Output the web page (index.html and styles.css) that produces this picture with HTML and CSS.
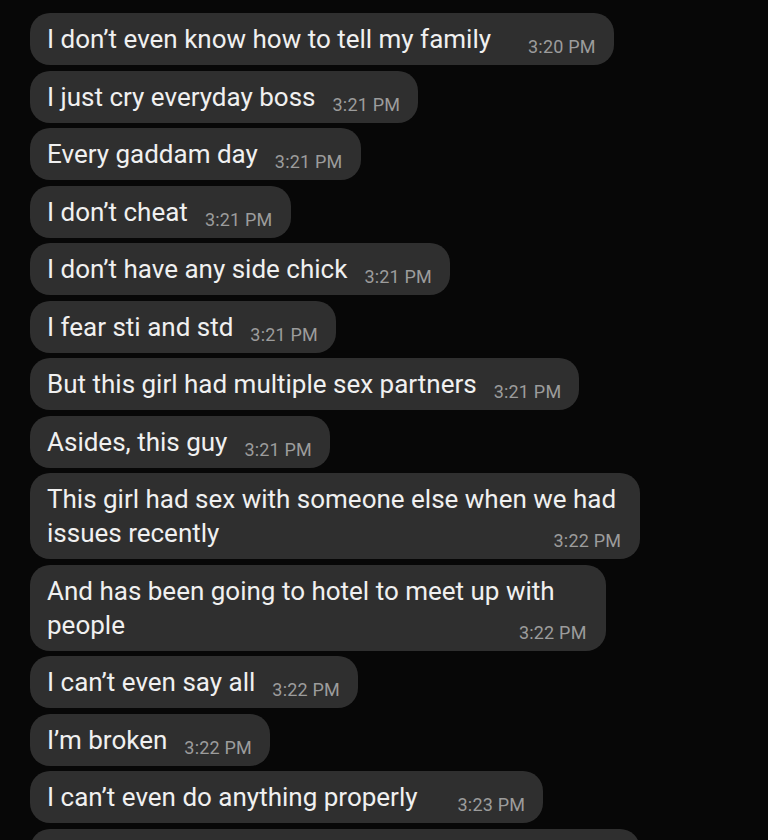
FILE: index.html
```html
<!DOCTYPE html>
<html lang="en">
<head>
<meta charset="utf-8">
<title>Chat</title>
<link rel="stylesheet" href="styles.css">
</head>
<body>
<main class="chat">
  <div class="bubble wide"><span class="text">I don’t even know how to tell my family</span><span class="time">3:20 PM</span></div>
  <div class="bubble"><span class="text">I just cry everyday boss</span><span class="time">3:21 PM</span></div>
  <div class="bubble"><span class="text">Every gaddam day</span><span class="time">3:21 PM</span></div>
  <div class="bubble"><span class="text">I don’t cheat</span><span class="time">3:21 PM</span></div>
  <div class="bubble"><span class="text">I don’t have any side chick</span><span class="time">3:21 PM</span></div>
  <div class="bubble"><span class="text">I fear sti and std</span><span class="time">3:21 PM</span></div>
  <div class="bubble"><span class="text">But this girl had multiple sex partners</span><span class="time">3:21 PM</span></div>
  <div class="bubble"><span class="text">Asides, this guy</span><span class="time">3:21 PM</span></div>
  <div class="bubble multi m1"><span class="text">This girl had sex with someone else when we had<br>issues recently</span><span class="time">3:22 PM</span></div>
  <div class="bubble multi m2"><span class="text">And has been going to hotel to meet up with<br>people</span><span class="time">3:22 PM</span></div>
  <div class="bubble"><span class="text">I can’t even say all</span><span class="time">3:22 PM</span></div>
  <div class="bubble"><span class="text">I’m broken</span><span class="time">3:22 PM</span></div>
  <div class="bubble wider"><span class="text">I can’t even do anything properly</span><span class="time">3:23 PM</span></div>
  <div class="bubble partial"></div>
</main>
</body>
</html>
```
FILE: styles.css
```css
html, body {
  margin: 0;
  padding: 0;
  background: #070707;
  height: 100%;
  overflow: hidden;
}

.chat {
  display: flex;
  flex-direction: column;
  align-items: flex-start;
  gap: 5.5px;
  padding: 13px 0 0 30px;
  font-family: Roboto, "Liberation Sans", sans-serif;
}

.bubble {
  display: flex;
  align-items: flex-end;
  gap: 17px;
  background: #2f2f2f;
  border-radius: 20px;
  padding: 9px 18px 9px 17px;
  color: #f0f0f0;
}

.bubble.wide {
  gap: 37px;
}

.bubble.wider {
  gap: 40px;
}

.text {
  font-size: 26px;
  line-height: 34px;
}

.time {
  font-size: 18px;
  line-height: 18px;
  letter-spacing: 0.2px;
  color: #9c9c9c;
  white-space: nowrap;
}

.bubble.multi {
  display: grid;
  padding-right: 19px;
}

.bubble.multi .text,
.bubble.multi .time {
  grid-area: 1 / 1;
}

.bubble.multi .time {
  justify-self: end;
  align-self: end;
}

.bubble.m1 .text {
  padding-right: 5px;
}

.bubble.m2 .text {
  padding-right: 32px;
}

.bubble.partial {
  width: 610px;
  height: 60px;
  padding: 0;
  box-sizing: border-box;
}
```
